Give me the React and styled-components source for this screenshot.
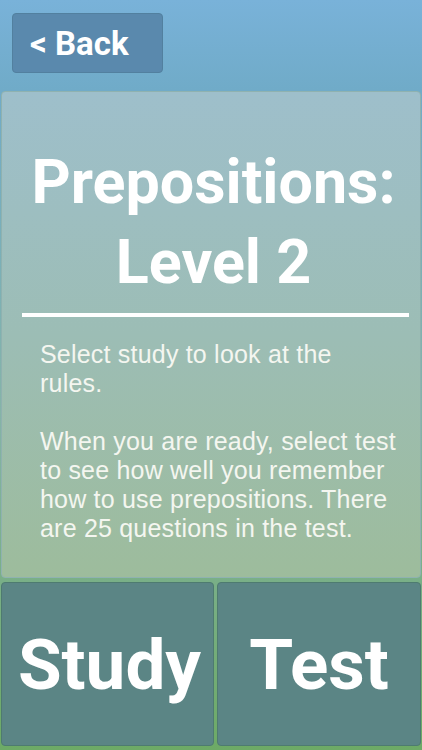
import styled, { createGlobalStyle } from 'styled-components';

const GlobalStyle = createGlobalStyle`
    html, body {
        margin: 0;
        padding: 0;
    }
    body {
        font-family: Roboto, "Liberation Sans", sans-serif;
    }
`;

const Page = styled.div`
    height: 750px;
    box-sizing: border-box;
    display: flex;
    flex-direction: column;
    padding: 13px 1px 4px 1px;
    background: linear-gradient(180deg, #79b2d9 0%, #70abc8 12%, #85b4a8 55%, #6daa66 100%);
`;

const TopBar = styled.div`
    display: flex;
    padding-left: 11px;
    margin-bottom: 18px;
`;

const BackButton = styled.button`
    width: 151px;
    height: 60px;
    border: 1px solid #52809f;
    border-radius: 4px;
    background: #5a89ad;
    color: #ffffff;
    font-family: Roboto, sans-serif;
    font-weight: 700;
    font-size: 33px;
    text-align: left;
    padding: 0 0 0 17px;
    cursor: pointer;
`;

const Panel = styled.section`
    height: 487px;
    box-sizing: border-box;
    padding: 50px 0 0 0;
    border: 1px solid #8fb2b0;
    border-radius: 4px;
    background: linear-gradient(180deg, #9ebfcb 0%, #9cbdb5 50%, #9dbc9c 100%);
`;

const Title = styled.h1`
    margin: 0;
    padding-left: 5px;
    font-family: Roboto, sans-serif;
    font-weight: 700;
    font-size: 61px;
    line-height: 80px;
    color: #ffffff;
    text-align: center;
`;

const Divider = styled.hr`
    margin: 11px 11px 0 20px;
    height: 4px;
    border: 0;
    background: #ffffff;
`;

const Body = styled.div`
    width: 357px;
    padding: 23px 0 0 38px;
    font-family: "Liberation Sans", Arial, sans-serif;
    font-size: 25px;
    letter-spacing: 0.2px;
    line-height: 29px;
    color: #f4f6f0;
    > p {
        margin: 0 0 29px 0;
    }
`;

const ButtonRow = styled.div`
    display: flex;
    gap: 3px;
    margin-top: 4px;
    height: 164px;
`;

const BigButton = styled.button`
    flex: ${(p) => (p.$width ? `0 0 ${p.$width}px` : '1 1 0')};
    border: 1px solid #4e7b70;
    border-radius: 4px;
    background: #5b8585;
    color: #ffffff;
    font-family: Roboto, sans-serif;
    font-weight: 700;
    font-size: 71px;
    padding: 0 0 0 ${(p) => p.$shift}px;
    cursor: pointer;
`;

const App = () => {
    return (
        <Page>
            <GlobalStyle />
            <TopBar>
                <BackButton>&lt; Back</BackButton>
            </TopBar>
            <Panel>
                <Title>
                    Prepositions:
                    <br />
                    Level 2
                </Title>
                <Divider />
                <Body>
                    <p>Select study to look at the rules.</p>
                    <p>
                        When you are ready, select test to see how well you remember how to use
                        prepositions. There are 25 questions in the test.
                    </p>
                </Body>
            </Panel>
            <ButtonRow>
                <BigButton $width={213} $shift={4}>Study</BigButton>
                <BigButton $shift={0}>Test</BigButton>
            </ButtonRow>
        </Page>
    );
};

export default App;
